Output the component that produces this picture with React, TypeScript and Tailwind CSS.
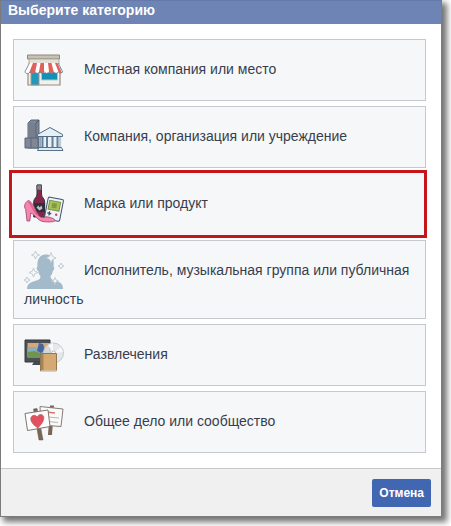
import type { ReactNode } from "react";
import clsx from "clsx";

// Shared frame for the 40px category pictures, text wraps beneath them
const Picture = ({ children }: { children: ReactNode }) => (
  <svg
    viewBox="0 0 40 40"
    aria-hidden="true"
    className="inline-block w-10 h-10 mr-5 align-middle"
  >
    {children}
  </svg>
);

const ShopIcon = () => (
  <Picture>
    <path d="M4 18h32v17H4z" fill="#f3f1ec" stroke="#948b80" strokeWidth="1.2" />
    <path d="M7 21h8v14H7z" fill="#2397b9" stroke="#a39a8d" />
    <path d="M17.500 22h16v8h-16z" fill="#168fb4" stroke="#a9cbd5" />
    <path d="M3.500 5h32v4h-32z" fill="#c6c0b5" stroke="#8f877c" />
    <path d="M5 9h30v5H5z" fill="#e4e0d8" stroke="#a49c91" strokeWidth=".8" />
    <path d="M5.500 13h28l5 10H.8z" fill="#fff" />
    <path
      d="M9 13h4l-2 10H5zM16.500 13h3.500v10h-5.200zM24 13h3.500l2.500 10h-4.800zM31 13h2.500l4.500 10h-3z"
      fill="#e3605b"
    />
    <path
      d="M5.500 13L.8 22q2.500 3.400 5.200 0 2.500 3 5 0 2.300 3 4.600 0 2.300 3 4.700 0 2.300 3 4.700 0 2.300 3 4.700 0 2.400 3 4.700 0 2.300 2.500 4.400 0l-4.600-9"
      fill="none"
      stroke="#728c9a"
      strokeWidth=".9"
    />
  </Picture>
);

const CompanyIcon = () => (
  <Picture>
    <path d="M4 6l3-3h8v28H4z" fill="#7d8694" stroke="#59677d" />
    <path d="M4 6h8v16H4z" fill="#777f8c" />
    <path d="M12 6l3-3" stroke="#475366" />
    <path d="M1 21h13v10H1z" fill="#808895" stroke="#56647a" />
    <path d="M7 21v10M12 6v15" stroke="#5a677d" />
    <path d="M16 19h22v14H16z" fill="#e6f2f8" />
    <path d="M13.500 17.500l12.500-7 12.500 7v2h-25z" fill="#e5f0f5" stroke="#516b84" />
    <path
      d="M18.500 20v11M23 20v11M28.500 20v11M33.500 20v11"
      stroke="#647f98"
      strokeWidth="2"
    />
    <path d="M16.500 20v11M36 20v11" stroke="#8fa7b8" />
    <path d="M15 30.500h22.500l1.500 3H13.500z" fill="#dfeaf0" stroke="#58728a" />
  </Picture>
);

const ProductIcon = () => (
  <Picture>
    <path
      d="M13 1h4.500v9c0 4 3.200 4 3.200 8v15h-11V18c0-4 3.300-4 3.300-8z"
      fill="#83264a"
      stroke="#303345"
    />
    <path d="M13 1h4.500v5H13z" fill="#86858e" stroke="#4d4852" strokeWidth=".7" />
    <path d="M10 19h11v9H10z" fill="#30303b" />
    <path d="M12.500 23.500l2-2 1 2 2-2 1 3-3 2z" fill="#c4c0c6" />
    <g transform="rotate(11 29 26)">
      <rect x="22" y="14" width="15.500" height="22" rx="1.500" fill="#eef3f6" stroke="#3f5370" />
      <path d="M24 17h11v9H24z" fill="#abc25b" stroke="#789044" />
      <path d="M27 19h5v5h-5z" fill="#819c40" />
      <path d="M26 28v4M24 30h4" stroke="#39455a" strokeWidth="1.300" />
      <circle cx="33" cy="30" r="1.200" fill="#bd4676" />
    </g>
    <path
      d="M4.300 16.500c-3.500 2-4.800 6-2.600 9L3 37h2.800l.9-8c5 1.500 6.300 8 13.300 8.700 4 .4 10 .4 11-1 .6-2-5.500-3.600-9-4-2.500 1.700-6 1-8-2-3-4.500-5-12.700-9.700-14.200z"
      fill="#f587ad"
      stroke="#a84c75"
      strokeWidth=".9"
    />
    <path d="M4.500 17.500c4 4 5 11 9.500 13.500" fill="none" stroke="#df5e91" strokeWidth="1.500" />
  </Picture>
);

const ArtistIcon = () => (
  <Picture>
    <path
      d="M3 38c0-5 3-6.500 8-8 4-1.200 5.500-2 5.500-5-1.300-1-2-3-2.200-5-2-1-2-4-.8-4.500C12.800 8 16 3.500 22 3.500c6.300 0 8.800 4.500 7.500 12 1.200.5 1 3.500-.7 4.500-.3 2-1 4-2.300 5 0 3 1.500 3.800 5.500 5 5 1.500 7 3 7 8z"
      fill="#a3bacb"
    />
    <path
      d="M11.500 0l1.200 2.800 2.800 1.200-2.800 1.200L11.500 8l-1.200-2.800L7.500 4l2.800-1.200zM27 1.500l1.500 3.800L32 7l-3.500 1.500L27 12l-1.500-3.500L22 7l3.500-1.700zM37 12l1 2 2 1-2 1-1 2-1-2-2-1 2-1zM9.500 17l1.300 3.200L14 21.500l-3.200 1.300L9.500 26l-1.300-3.200L5 21.500l3.200-1.300zM3 26l1 2 2 1-2 1-1 2-1-2-2-1 2-1zM31 26.500l1 2.500 2.500 1-2.500 1-1 2.500-1-2.500-2.500-1 2.500-1z"
      fill="#f3f6f9"
      stroke="#b9c1c8"
      strokeWidth=".8"
    />
  </Picture>
);

const EntertainmentIcon = () => (
  <Picture>
    <path d="M1 5h25v22H1z" fill="#4b5054" stroke="#34383d" />
    <path d="M3.500 8h22v14h-22z" fill="#d5a77b" />
    <path d="M3.500 12h10l6 4h6v6h-22z" fill="#8daeb4" />
    <path d="M3.500 17l7-1 8 3 7-2v6h-22z" fill="#6f9551" />
    <path d="M15 8l4 1 2 6-4 3-4-2z" fill="#4566a2" />
    <path d="M8 30l2-3h8v3z" fill="#444a50" />
    <circle cx="29.500" cy="18" r="10" fill="#e0e4e7" fillOpacity=".8" stroke="#c4c9cd" />
    <path d="M30 18l7-6 2 5zM29 18l-5-8 5-2z" fill="#f7f8f9" />
    <circle cx="29.500" cy="18" r="2" fill="#fff" stroke="#b7bdc1" />
    <path d="M16.500 18.500h16V36h-16z" fill="#d4aa72" stroke="#947653" />
    <path d="M17 19h2.500v16.500H17z" fill="#aa8257" />
    <path d="M17 36h16" stroke="#f0e8d7" />
  </Picture>
);

const CommunityIcon = () => (
  <Picture>
    <path d="M26 3.500h4L28 33h-4z" fill="#796756" />
    <path d="M16 4.500l23 2.500-2 17.500L17 23z" fill="#fafafa" stroke="#857d78" />
    <path d="M22 10l9 1" stroke="#df706e" strokeWidth="1.600" />
    <path d="M24 15l11 1M24 19.500l10 1" stroke="#bab5af" strokeWidth="1.200" />
    <path d="M9.500 7l3.500-.500L19 38h-4z" fill="#796756" stroke="#615348" strokeWidth=".5" />
    <path d="M1 11.500l23-3.500 2 16.500-22.500 4z" fill="#fefefe" stroke="#80756e" />
    <path
      d="M14 26c-4-2.500-7.200-5.800-7.200-9 0-4 4.700-5 6.500-1.800C14.500 11 20.200 12 19.800 16c-.2 4-3.200 7-5.800 10z"
      fill="#e15160"
      stroke="#bc4650"
      strokeWidth=".6"
    />
  </Picture>
);

// Page categories, in display order
const categories = [
  { name: "Местная компания или место", icon: <ShopIcon /> },
  { name: "Компания, организация или учреждение", icon: <CompanyIcon /> },
  { name: "Марка или продукт", icon: <ProductIcon />, highlighted: true },
  { name: "Исполнитель, музыкальная группа или публичная личность", icon: <ArtistIcon /> },
  { name: "Развлечения", icon: <EntertainmentIcon /> },
  { name: "Общее дело или сообщество", icon: <CommunityIcon /> },
];

const App = () => {
  return (
    <main className="pr-[9px] pb-[9px] bg-white font-['Liberation_Sans',Arial,sans-serif]">
      <section
        aria-labelledby="dialog-title"
        className="bg-white border border-t-0 border-[#7b7b7b] shadow-[4px_4px_6px_1px_rgba(0,0,0,0.55)]"
      >
        {/* Title bar */}
        <header className="h-6 px-[7px] bg-[#6d84b4] border-t border-[#647aa8]">
          <h1 id="dialog-title" className="text-sm leading-[18px] font-bold text-white">
            Выберите категорию
          </h1>
        </header>

        {/* Category list */}
        <ul className="flex flex-col gap-[5px] pt-[15px] pb-[15px] pl-3 pr-[15px]">
          {categories.map((category) => (
            <li key={category.name} className="relative">
              <button
                type="button"
                className={clsx(
                  "block w-full p-[10px] text-left text-[14px] leading-[17px] text-[#373e4d] bg-[#f6f7f9] border",
                  category.highlighted ? "border-[#f6f7f9]" : "border-[#c5c8cc]"
                )}
              >
                {category.icon}
                {category.name}
              </button>
              {category.highlighted && (
                <span className="absolute -left-1 -right-px -inset-y-[3px] border-3 border-[#c4171c] pointer-events-none" />
              )}
            </li>
          ))}
        </ul>

        {/* Actions */}
        <footer className="flex justify-end pt-[10px] pb-[9px] pr-[10px] bg-[#f0f0f0] border-t border-[#c8c8c8]">
          <button
            type="button"
            className="h-7 px-[7px] rounded-xs bg-[#4267b2] text-xs font-bold text-white"
          >
            Отмена
          </button>
        </footer>
      </section>
    </main>
  );
};

export default App;
